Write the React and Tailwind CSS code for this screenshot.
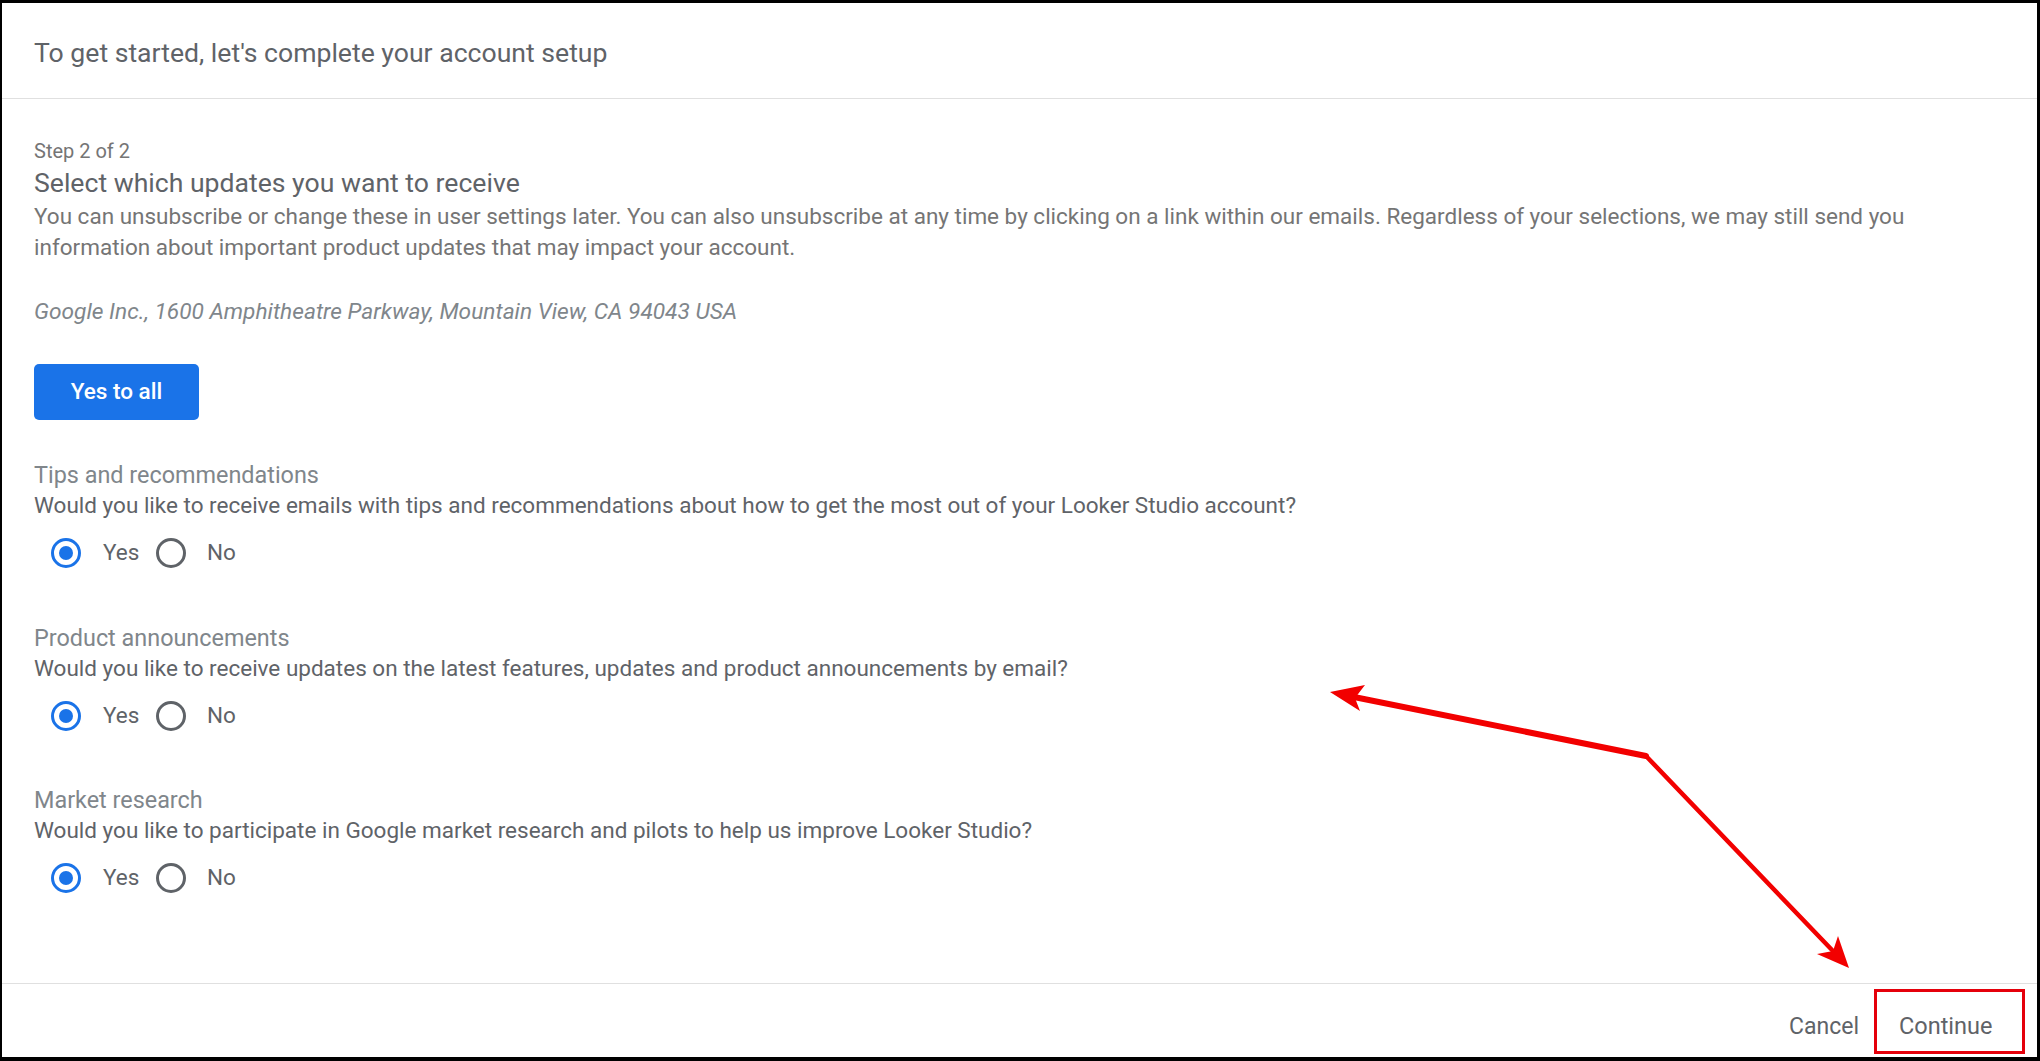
import React from "react";

const font = { fontFamily: "Roboto, 'Noto Sans', Arial, sans-serif" };

function Radio({ checked }) {
  if (checked) {
    return (
      <span className="w-[30px] h-[30px] rounded-full border-[3px] border-[#1a73e8] flex items-center justify-center shrink-0">
        <span className="w-[14px] h-[14px] rounded-full bg-[#1a73e8]" />
      </span>
    );
  }
  return <span className="block w-[30px] h-[30px] rounded-full border-[3px] border-[#5f6368] shrink-0" />;
}

function Preference({ title, question, className }) {
  return (
    <div className={className}>
      <div className="text-[23.4px] leading-[31px] text-[#80868b]">{title}</div>
      <div className="-mt-[1px] text-[22.5px] leading-[31px] text-[#5f6368]">{question}</div>
      <div className="mt-[12px] h-[40px] flex items-center pl-[17px] text-[22.5px] text-[#5f6368]">
        <Radio checked />
        <span className="ml-[22px] w-[36px]">Yes</span>
        <span className="ml-[17px] flex items-center">
          <Radio checked={false} />
        </span>
        <span className="ml-[21px]">No</span>
      </div>
    </div>
  );
}

function Annotations() {
  return (
    <svg
      className="absolute inset-0 pointer-events-none"
      width="2040"
      height="1061"
      viewBox="0 0 2040 1061"
    >
      <path d="M1352 694 L1644 753" stroke="#f20000" strokeWidth="6" strokeLinecap="round" fill="none" />
      <path d="M1644 753 L1830 947" stroke="#f20000" strokeWidth="4.5" strokeLinecap="round" fill="none" />
      <polygon points="1328,689 1363,682 1353,695 1358,708" fill="#f20000" />
      <polygon points="1847,965 1836,933 1831,948 1815,951" fill="#f20000" />
    </svg>
  );
}

export default function App() {
  return (
    <div
      style={font}
      className="relative w-[2040px] h-[1061px] bg-white flex flex-col border-black border-t-[3px] border-l-[2px] border-r-[3px] border-b-[4px]"
    >
      <header className="h-[96px] shrink-0 flex items-center px-[32px] pt-[5px] border-b border-[#e0e0e0]">
        <h1 className="text-[26.6px] leading-[34px] text-[#5f6368] font-normal">
          To get started, let's complete your account setup
        </h1>
      </header>

      <main className="flex-1 px-[32px] pt-[38px]">
        <div className="text-[20px] leading-[28px] text-[#757575]">Step 2 of 2</div>
        <h2 className="mt-[1px] text-[26.6px] leading-[34px] text-[#5f6368] font-normal">
          Select which updates you want to receive
        </h2>
        <p className="mt-[1px] text-[22.5px] leading-[31px] text-[#757575]">
          You can unsubscribe or change these in user settings later. You can also unsubscribe at any time by clicking on a link within our emails. Regardless of your selections, we may still send you
          <br />
          information about important product updates that may impact your account.
        </p>
        <p className="mt-[33px] text-[22.7px] leading-[31px] text-[#80868b] italic">
          Google Inc., 1600 Amphitheatre Parkway, Mountain View, CA 94043 USA
        </p>
        <button className="mt-[37px] w-[165px] h-[56px] rounded-[5px] bg-[#1a73e8] text-white text-[22.5px] font-medium flex items-center justify-center">
          Yes to all
        </button>

        <Preference
          className="mt-[40px]"
          title="Tips and recommendations"
          question="Would you like to receive emails with tips and recommendations about how to get the most out of your Looker Studio account?"
        />
        <Preference
          className="mt-[50px]"
          title="Product announcements"
          question="Would you like to receive updates on the latest features, updates and product announcements by email?"
        />
        <Preference
          className="mt-[49px]"
          title="Market research"
          question="Would you like to participate in Google market research and pilots to help us improve Looker Studio?"
        />
      </main>

      <footer className="h-[74px] shrink-0 border-t border-[#e0e0e0] flex items-start justify-end pt-[5px] pr-[12px]">
        <button className="h-[65px] flex items-center pt-[11px] mr-[15px] text-[23px] text-[#5f6368]">
          Cancel
        </button>
        <button className="h-[65px] w-[151px] border-[3px] border-[#e5000b] flex items-center pt-[10px] pl-[22px] text-[23.5px] text-[#5f6368]">
          Continue
        </button>
      </footer>

      <Annotations />
    </div>
  );
}
